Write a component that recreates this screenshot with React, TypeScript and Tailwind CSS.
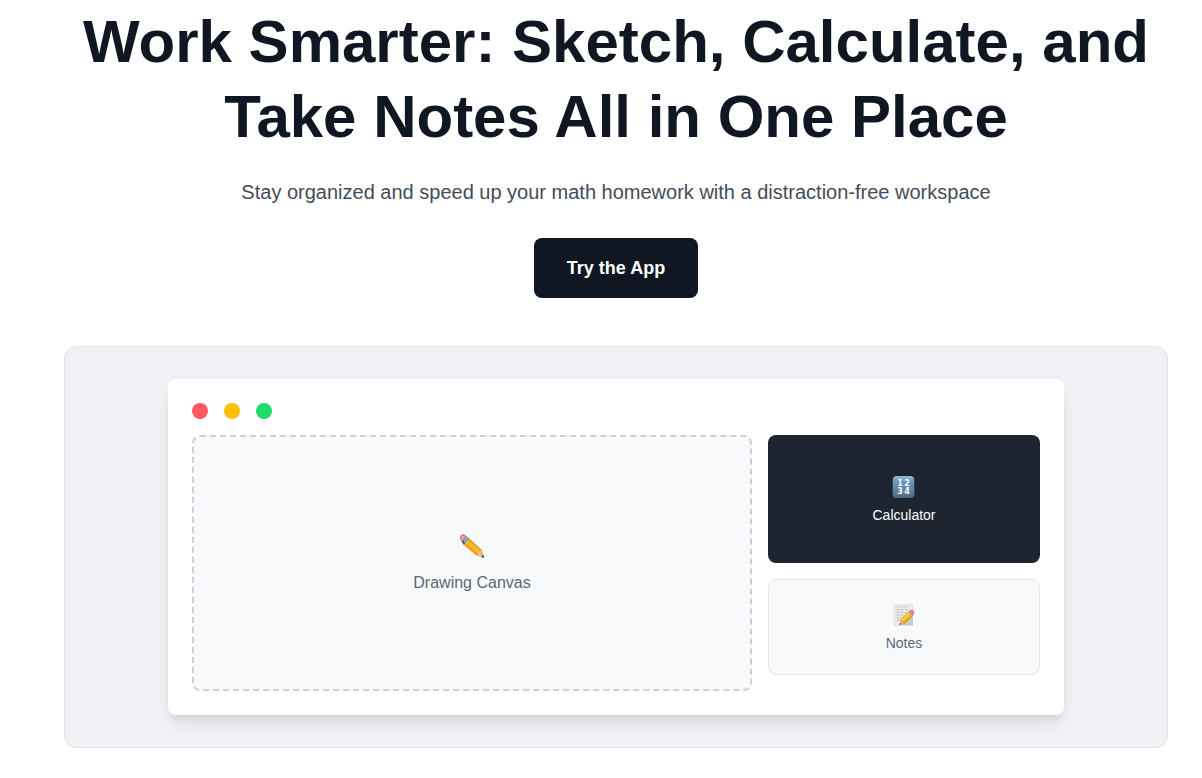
function PencilIcon() {
  return (
    <svg className="h-8 w-8" viewBox="0 0 32 32" aria-hidden="true">
      <defs>
        <linearGradient id="pencil-body" gradientUnits="userSpaceOnUse" x1="13.5" y1="19.5" x2="18.5" y2="13.5">
          <stop offset="0" stopColor="#d98a16" />
          <stop offset="0.35" stopColor="#f5ab1c" />
          <stop offset="0.75" stopColor="#fdc63a" />
          <stop offset="1" stopColor="#d99a2c" />
        </linearGradient>
      </defs>
      <path d="M4 7.6C3.5 5.2 5.8 2.8 8.4 3.4L10.6 5.2L5.6 10.4Z" fill="#e0707a" />
      <path d="M5 7C5.4 5.3 6.8 4.4 8.2 4.7L9.2 5.5L6.2 8.7Z" fill="#f5a3a8" />
      <path d="M10.6 5.2L13.6 7.8L7.8 13.8L5.6 10.4Z" fill="#8399ac" />
      <path d="M11.9 6.6L6.4 12.1" stroke="#b7c5cf" strokeWidth="0.8" />
      <path d="M5.6 10.4L7.8 13.8L9.2 12.3L7 9.2Z" fill="#46535f" />
      <path d="M13.6 7.8L26.2 19.2L20.6 24.8L7.8 13.8Z" fill="url(#pencil-body)" />
      <path d="M11.6 10L24 21" stroke="#ea9f18" strokeWidth="0.7" />
      <path d="M26.2 19.2L28 26.6L20.6 24.8C21 23.6 21.9 22.9 23 22.9C23.2 21.2 24.4 19.9 26.2 19.2Z" fill="#e0bb87" />
      <path d="M27.4 24.1L28.2 26.8L25.3 26C25.7 25 26.4 24.4 27.4 24.1Z" fill="#333536" />
    </svg>
  );
}

function NumbersIcon() {
  return (
    <svg className="h-7 w-7" viewBox="0 0 28 28" aria-hidden="true">
      <defs>
        <linearGradient id="numbers-tile" x1="0" y1="0" x2="0" y2="1">
          <stop offset="0" stopColor="#8eb2d0" />
          <stop offset="0.25" stopColor="#6b98bc" />
          <stop offset="1" stopColor="#536f87" />
        </linearGradient>
      </defs>
      <rect x="2.5" y="3" width="22" height="22" rx="4" fill="#486580" />
      <rect x="3" y="3.3" width="21" height="20.8" rx="3.6" fill="url(#numbers-tile)" />
      <path d="M5.5 4H21.5" stroke="#b3cbdc" strokeWidth="0.8" strokeLinecap="round" />
      <g fill="#f4f8fb" fontFamily="DejaVu Sans, sans-serif" fontWeight="700" fontSize="8" textAnchor="middle">
        <text x="10" y="12.8">1</text>
        <text x="17" y="12.8">2</text>
        <text x="10" y="21">3</text>
        <text x="17" y="21">4</text>
      </g>
    </svg>
  );
}

function MemoIcon() {
  return (
    <svg className="h-7 w-7" viewBox="0 0 28 28" aria-hidden="true">
      <rect x="4" y="3" width="19" height="22" fill="#d8d8d8" />
      <rect x="4.5" y="3.4" width="18" height="21" fill="#ececeb" />
      <path d="M6.5 6H20" stroke="#b5b5b5" strokeWidth="0.7" strokeDasharray="2 .8 1 .6" />
      <path d="M6.5 8.7H18M6.5 11.4H17M6.5 14H14M6.5 16.6H12M6.5 19.2H10" stroke="#aaa" strokeWidth="0.8" strokeDasharray="2.4 .7 1.3 .5" />
      <path d="M11 24L23 14V24Z" fill="#c9c9c9" />
      <path d="M10.3 18.6L18.5 10.6L22.7 14.6L14.3 22.7L10 23.4Z" fill="#f3ad1d" />
      <path d="M11.5 18.9L19.4 11.3L20.8 12.6L12.6 20.4Z" fill="#ffcf50" />
      <path d="M14.3 22.7L22.7 14.6" stroke="#b87412" strokeWidth="0.8" />
      <path d="M10.3 18.8L14 22.6L9.7 23.6Z" fill="#dcb678" />
      <path d="M9.9 22L11.3 23.2L9.5 23.7Z" fill="#343434" />
      <path d="M18.5 10.6L19.7 9.5L23.8 13.4L22.7 14.6Z" fill="#8799aa" />
      <path d="M19.7 9.5C21.2 8.2 23 8.9 23.9 10C24.8 11.2 24.7 12.6 23.8 13.4Z" fill="#ed7c88" />
    </svg>
  );
}

export default function App() {
  return (
    <main className="bg-white pt-1 pr-[34px] pb-[30px] pl-16 font-['Liberation_Sans',Arial,sans-serif]">
      <section className="text-center">
        <h1 className="mb-6 text-6xl leading-[75px] font-bold text-[#101722]">
          Work Smarter: Sketch, Calculate, and Take Notes All in One Place
        </h1>
        <p className="mb-8 text-xl text-[#434c5b]">
          Stay organized and speed up your math homework with a distraction-free workspace
        </p>
        <button type="button" className="rounded-lg bg-[#101722] px-[33px] py-4 text-lg font-bold text-white">
          Try the App
        </button>
      </section>

      {/* App preview */}
      <section className="mt-12 rounded-xl border border-[#e1e4e8] bg-[#eff1f5] p-8">
        <div className="mx-auto max-w-4xl rounded-lg bg-white p-6 shadow-lg">
          <div className="mb-4 flex gap-4">
            <span className="h-4 w-4 rounded-full bg-[#ff5a5f]" />
            <span className="h-4 w-4 rounded-full bg-[#ffbf00]" />
            <span className="h-4 w-4 rounded-full bg-[#1edb70]" />
          </div>
          <div className="grid grid-cols-3 gap-4">
            <div className="col-span-2 flex h-64 flex-col items-center justify-center gap-2 rounded-lg border-2 border-dashed border-[#cbd0d7] bg-[#f8f9fb] text-base text-[#5e6676]">
              <PencilIcon />
              <span>Drawing Canvas</span>
            </div>
            <div className="flex flex-col gap-4">
              <div className="flex h-32 flex-col items-center justify-center gap-1 rounded-lg bg-[#1e2531] text-sm text-white">
                <NumbersIcon />
                <span>Calculator</span>
              </div>
              <div className="flex h-24 flex-col items-center justify-center gap-1 rounded-lg border border-[#e1e4e8] bg-[#f8f9fb] text-sm text-[#5e6676]">
                <MemoIcon />
                <span>Notes</span>
              </div>
            </div>
          </div>
        </div>
      </section>
    </main>
  );
}
